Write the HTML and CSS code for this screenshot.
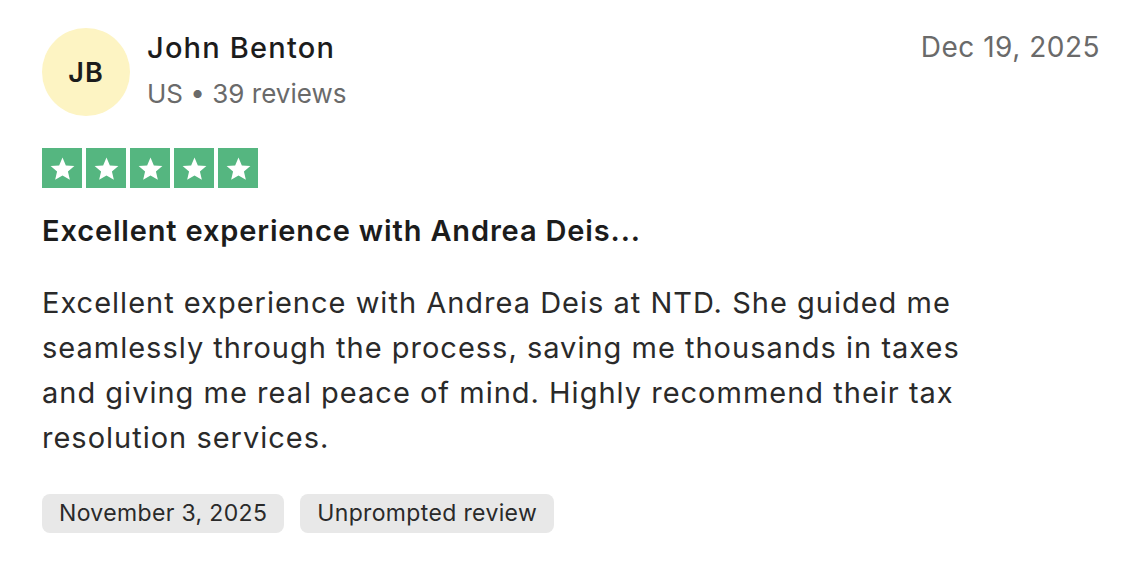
FILE: index.html
```html
<!DOCTYPE html>
<html>
<head>
<meta charset="utf-8">
<link rel="stylesheet" href="styles.css">
</head>
<body>
<article class="review">
  <header class="head">
    <div class="avatar">JB</div>
    <div class="who">
      <div class="name">John Benton</div>
      <div class="meta">US • 39 reviews</div>
    </div>
    <div class="date">Dec 19, 2025</div>
  </header>
  <div class="stars">
    <span class="star"><svg viewBox="0 0 24 24"><path d="M12 3.5l2.6 6.1 6.6.5-5 4.3 1.5 6.4L12 17.4l-5.7 3.4 1.5-6.4-5-4.3 6.6-.5z"/></svg></span>
    <span class="star"><svg viewBox="0 0 24 24"><path d="M12 3.5l2.6 6.1 6.6.5-5 4.3 1.5 6.4L12 17.4l-5.7 3.4 1.5-6.4-5-4.3 6.6-.5z"/></svg></span>
    <span class="star"><svg viewBox="0 0 24 24"><path d="M12 3.5l2.6 6.1 6.6.5-5 4.3 1.5 6.4L12 17.4l-5.7 3.4 1.5-6.4-5-4.3 6.6-.5z"/></svg></span>
    <span class="star"><svg viewBox="0 0 24 24"><path d="M12 3.5l2.6 6.1 6.6.5-5 4.3 1.5 6.4L12 17.4l-5.7 3.4 1.5-6.4-5-4.3 6.6-.5z"/></svg></span>
    <span class="star"><svg viewBox="0 0 24 24"><path d="M12 3.5l2.6 6.1 6.6.5-5 4.3 1.5 6.4L12 17.4l-5.7 3.4 1.5-6.4-5-4.3 6.6-.5z"/></svg></span>
  </div>
  <h2 class="title">Excellent experience with Andrea Deis...</h2>
  <p class="body">Excellent experience with Andrea Deis at NTD. She guided me seamlessly through the process, saving me thousands in taxes and giving me real peace of mind. Highly recommend their tax resolution services.</p>
  <div class="tags">
    <span class="tag">November 3, 2025</span>
    <span class="tag">Unprompted review</span>
  </div>
</article>
</body>
</html>
```
FILE: styles.css
```css
html, body { margin: 0; padding: 0; background: #fff; }
body { font-family: Inter, "Noto Sans", sans-serif; color: #2a2a2a; }
.review { padding: 28px 48px 0 42px; }
.head { display: flex; align-items: flex-start; }
.avatar {
  width: 88px; height: 88px; border-radius: 50%;
  background: #fdf4c3; color: #1c1c1c;
  display: flex; align-items: center; justify-content: center;
  font-size: 27px; font-weight: 600; letter-spacing: 1px; flex: none;
}
.who { margin-left: 17px; flex: 1; }
.name { font-size: 29px; font-weight: 500; letter-spacing: 1.2px; line-height: 40px; color: #1c1c1c; }
.meta { margin-top: 8px; font-size: 26px; line-height: 36px; color: #6a6a6a; }
.date { font-size: 28px; letter-spacing: 0.5px; color: #6a6a6a; line-height: 40px; margin-top: -1px; }
.stars { display: flex; gap: 4px; margin-top: 32px; }
.star { width: 40px; height: 40px; background: #55b680; display: flex; align-items: center; justify-content: center; }
.star svg { width: 31px; height: 31px; fill: #fff; }
.title { margin: 25px 0 0; font-size: 29px; font-weight: 600; letter-spacing: 0.85px; line-height: 36px; color: #1c1c1c; }
.body { margin: 31px 0 0; font-size: 29px; letter-spacing: 1px; line-height: 45px; width: 975px; color: #2a2a2a; }
.tags { display: flex; gap: 16px; margin-top: 34px; }
.tag { background: #e8e8e8; border-radius: 8px; font-size: 23px; letter-spacing: 0.35px; line-height: 39px; padding: 0 17px; color: #2a2a2a; }
```
